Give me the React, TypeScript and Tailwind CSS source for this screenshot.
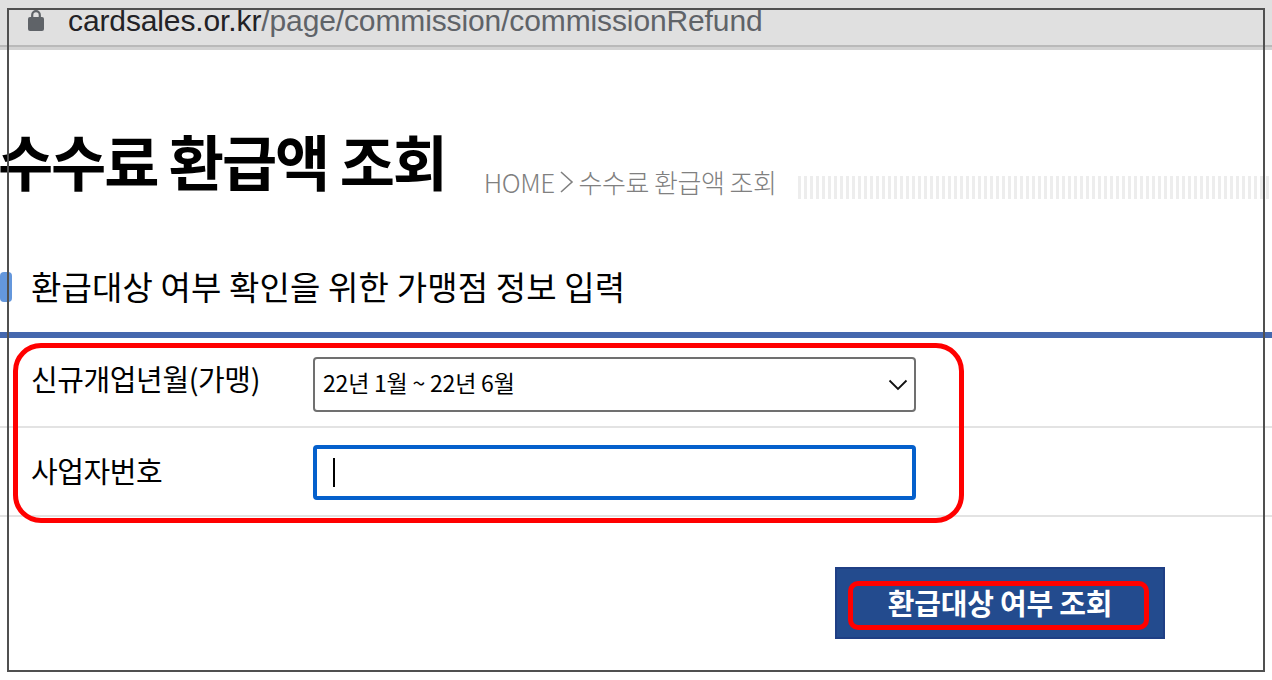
import React from "react";

const KR = "font-['Noto_Sans_CJK_KR','Noto_Sans',sans-serif]";

function LockIcon() {
  return (
    <svg width="16" height="21" viewBox="0 0 16 21" className="shrink-0">
      <path d="M4.2 8V5a3.8 3.8 0 0 1 7.6 0V8" fill="none" stroke="#5f6368" strokeWidth="2.2" />
      <rect x="0" y="7" width="16" height="14" rx="2" fill="#5f6368" />
    </svg>
  );
}

export default function App() {
  return (
    <div className={`relative w-[1272px] h-[680px] overflow-hidden bg-white ${KR}`}>
      <div className="h-[45px] bg-[#e0e0e0] flex items-center pl-[28px] pb-[4px] font-['Liberation_Sans',sans-serif] text-[30px] tracking-[-0.12px] overflow-hidden">
        <LockIcon />
        <span className="ml-[24px] text-[#222226]">cardsales.or.kr</span>
        <span className="text-[#5f6368]">/page/commission/commissionRefund</span>
      </div>
      <div className="h-[2px] bg-[#b9b9b9]" />
      <div className="h-[3px] bg-[#d2d2d2]" />

      <div className="flex items-center mt-[68px] h-[84px]">
        <h1 className="ml-[-2px] text-[60px] leading-none font-bold text-black tracking-[-2.1px] whitespace-nowrap">수수료 환급액 조회</h1>
        <div className="ml-[38px] mt-[44px] text-[26px] leading-none tracking-[-0.5px] font-light text-[#808080] flex items-center whitespace-nowrap">
          <span>HOME</span>
          <svg width="16" height="24" viewBox="0 0 16 24" className="mx-[4px]">
            <path d="M2 2l11 10L2 22" fill="none" stroke="#808080" strokeWidth="1.6" />
          </svg>
          <span>수수료 환급액 조회</span>
        </div>
        <div className="flex-1 ml-[22px] mt-[54px] h-[23px] bg-[repeating-linear-gradient(90deg,#ededed_0,#ededed_3px,#ffffff_3px,#ffffff_6px)]" />
      </div>

      <div className="flex items-center h-[60px] mt-[55px]">
        <div className="w-[12px] h-[30px] rounded-[4px] bg-[#6497dc]" />
        <h2 className="ml-[19px] -mt-[2px] text-[33px] leading-none font-normal text-black tracking-[0.14px] whitespace-nowrap">환급대상 여부 확인을 위한 가맹점 정보 입력</h2>
      </div>

      <div className="h-[6px] mt-[15px] bg-[#4568ae]" />

      <div className="h-[90px] border-b-2 border-[#e3e3e3] flex items-start pt-[19px] pl-[31px]">
        <label className="w-[282px] -mt-[2px] text-[29px] leading-[46px] text-black tracking-[-0.4px] whitespace-nowrap">신규개업년월(가맹)</label>
        <div className="w-[603px] h-[55px] border-2 border-[#707070] rounded-[4px] flex items-center justify-between pl-[8px] pr-[6px] text-[23px] text-black tracking-[-0.2px] whitespace-nowrap">
          <span className="-mt-[5px]">22년 1월 ~ 22년 6월</span>
          <svg width="20" height="12" viewBox="0 0 20 12">
            <path d="M1.5 1.5L10 10l8.5-8.5" fill="none" stroke="#111" strokeWidth="1.8" />
          </svg>
        </div>
      </div>

      <div className="h-[89px] border-b-2 border-[#e3e3e3] flex items-start pt-[17px] pl-[31px]">
        <label className="w-[282px] mt-[2px] text-[29px] leading-[46px] text-black tracking-[-0.4px]">사업자번호</label>
        <div className="w-[603px] h-[55px] border-[4px] border-[#0560cc] rounded-[4px] flex items-center pl-[16px]">
          <div className="w-[2px] h-[29px] bg-black" />
        </div>
      </div>

      <div className="flex justify-end mt-[50px] pr-[107px]">
        <button className="w-[330px] h-[72px] bg-[#234b8e] border-2 border-[#1f3f85] text-white text-[29px] font-bold tracking-[-0.2px] flex items-center justify-center whitespace-nowrap">
          환급대상 여부 조회
        </button>
      </div>

      <div className="absolute left-[13px] top-[343px] w-[951px] h-[180px] border-[5px] border-[#ff0000] rounded-[28px]" />
      <div className="absolute left-[848px] top-[581px] w-[301px] h-[49px] border-[5px] border-[#ff0000] rounded-[10px]" />
      <div className="absolute left-[7px] top-[8px] w-[1258px] h-[664px] border-2 border-[#505050]" />
    </div>
  );
}
